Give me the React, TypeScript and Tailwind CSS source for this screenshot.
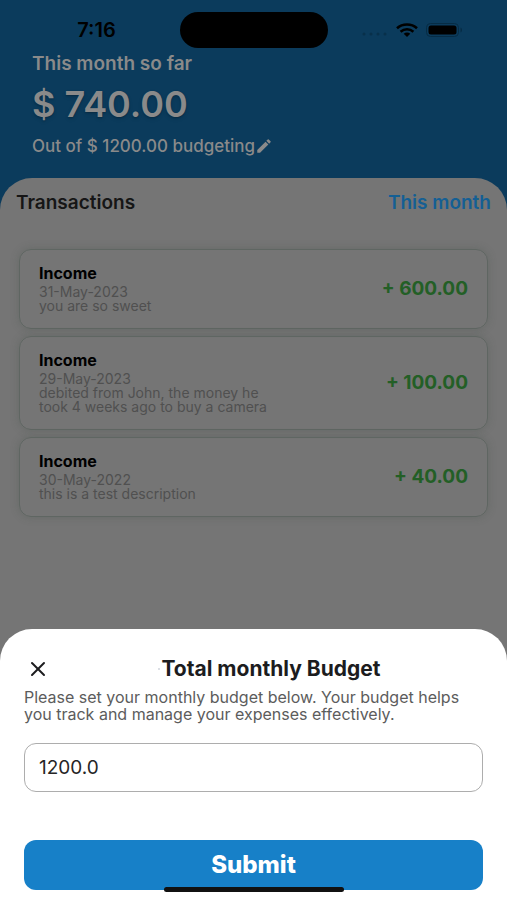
import { X } from 'lucide-react';
import { MdEdit } from 'react-icons/md';

const transactions = [
  { id: 1, title: 'Income', date: '31-May-2023', note: 'you are so sweet', amount: '+ 600.00' },
  {
    id: 2,
    title: 'Income',
    date: '29-May-2023',
    note: 'debited from John, the money he took 4 weeks ago to buy a camera',
    amount: '+ 100.00',
  },
  { id: 3, title: 'Income', date: '30-May-2022', note: 'this is a test description', amount: '+ 40.00' },
];

function StatusBar() {
  return (
    <div className="grid grid-cols-3 items-center pt-3 text-black">
      <span className="pl-6 text-center text-xl leading-9 font-semibold">7:16</span>
      <div className="h-9 w-37 justify-self-center rounded-full bg-black" />
      <div className="flex items-center justify-end gap-2 pr-11">
        <svg width="28" height="6" viewBox="0 0 28 6" fill="#08304a" className="mt-2" aria-hidden="true">
          <circle cx="4" cy="3" r="1.5" />
          <circle cx="11" cy="3" r="1.5" />
          <circle cx="18" cy="3" r="1.5" />
          <circle cx="25" cy="3" r="1.5" />
        </svg>
        <svg width="22" height="14" viewBox="0 0 22 14" fill="none" stroke="currentColor" strokeWidth="2.6" aria-hidden="true">
          <path d="M1 5.2C6.5.2 15.5.2 21 5.2" />
          <path d="M4.6 8.7c3.7-3.3 9.1-3.3 12.8 0" />
          <path d="M7.7 10.7c1.9-1.7 4.7-1.7 6.6 0L11 14z" fill="currentColor" stroke="none" />
        </svg>
        <svg width="37" height="14" viewBox="0 0 37 14" aria-hidden="true">
          <rect x="0.5" y="0.5" width="32" height="13" rx="4" fill="none" stroke="#072c44" />
          <rect x="2.5" y="2.5" width="28" height="9" rx="2.5" fill="currentColor" />
          <path d="M34.5 4.5c2 .8 2 4.2 0 5z" fill="#072c44" />
        </svg>
      </div>
    </div>
  );
}

function BudgetSheet() {
  return (
    <section className="rounded-t-[32px] bg-white px-6 pt-7 pb-2" aria-labelledby="sheet-title">
      <div className="grid grid-cols-[28px_1fr_28px] items-center">
        <button type="button" aria-label="Close" className="flex justify-center text-[#1c1c1e]">
          <X size={24} strokeWidth={2} />
        </button>
        <div className="flex items-center justify-center gap-px pl-8">
          <span className="size-0.5 rounded-full bg-gray-300" />
          <h2 id="sheet-title" className="text-[21px] leading-6 font-bold text-[#1c1c1e]">
            Total monthly Budget
          </h2>
        </div>
      </div>
      <label htmlFor="budget" className="mt-2 block text-base leading-[17px] text-[#5c5c5c]">
        Please set your monthly budget below. Your budget helps you track and manage your expenses effectively.
      </label>
      <input
        id="budget"
        defaultValue="1200.0"
        inputMode="decimal"
        className="mt-5 h-[49px] w-full rounded-xl border border-[#adadad] px-[14px] text-[19px] text-[#262626] outline-none"
      />
      <button
        type="button"
        className="mt-12 block h-[50px] w-full rounded-xl bg-[#1780c8] text-2xl font-extrabold text-white"
      >
        Submit
      </button>
      {/* Home indicator */}
      <div className="relative mx-auto -mt-[3px] h-[5px] w-45 rounded-full bg-[#111111]" />
    </section>
  );
}

export default function App() {
  return (
    <main className="flex min-h-screen flex-col bg-[#0b3b5c] font-['Inter',sans-serif]">
      <header className="pb-5">
        <StatusBar />
        <div className="px-8 text-[#8a8a8a]">
          <p className="mt-1 text-[19px] leading-6 font-semibold">This month so far</p>
          <h1 className="mt-2 text-4xl leading-10 font-semibold text-shadow-md">$ 740.00</h1>
          <div className="mt-[10px] flex items-center">
            <p className="text-[17px] leading-6 font-medium">Out of $ 1200.00 budgeting</p>
            <button type="button" aria-label="Edit budget">
              <MdEdit size={18} />
            </button>
          </div>
        </div>
      </header>

      <div className="flex flex-1 flex-col rounded-t-[32px] bg-[#757575]">
        <div className="flex items-center justify-between px-4 pt-[13px] text-[19px] leading-6 font-semibold">
          <h2 className="text-[#161616]">Transactions</h2>
          <button type="button" className="text-[#145f94]">
            This month
          </button>
        </div>
        <ul className="mt-[34px] flex flex-1 flex-col gap-[7px] px-[19px] pb-6">
          {transactions.map((item) => (
            <li
              key={item.id}
              className="flex items-center justify-between rounded-xl border border-[#5f6662] px-[19px] py-[15px] shadow-[0_0_8px_rgba(60,75,65,0.25)]"
            >
              <div className="w-60">
                <h3 className="mb-1 text-base leading-4 font-bold text-black">{item.title}</h3>
                <p className="text-sm leading-[14px] text-[#505050]">
                  {item.date}
                  <br />
                  {item.note}
                </p>
              </div>
              <span className="text-[19px] leading-6 font-bold text-[#235f26]">{item.amount}</span>
            </li>
          ))}
        </ul>
        <BudgetSheet />
      </div>
    </main>
  );
}
